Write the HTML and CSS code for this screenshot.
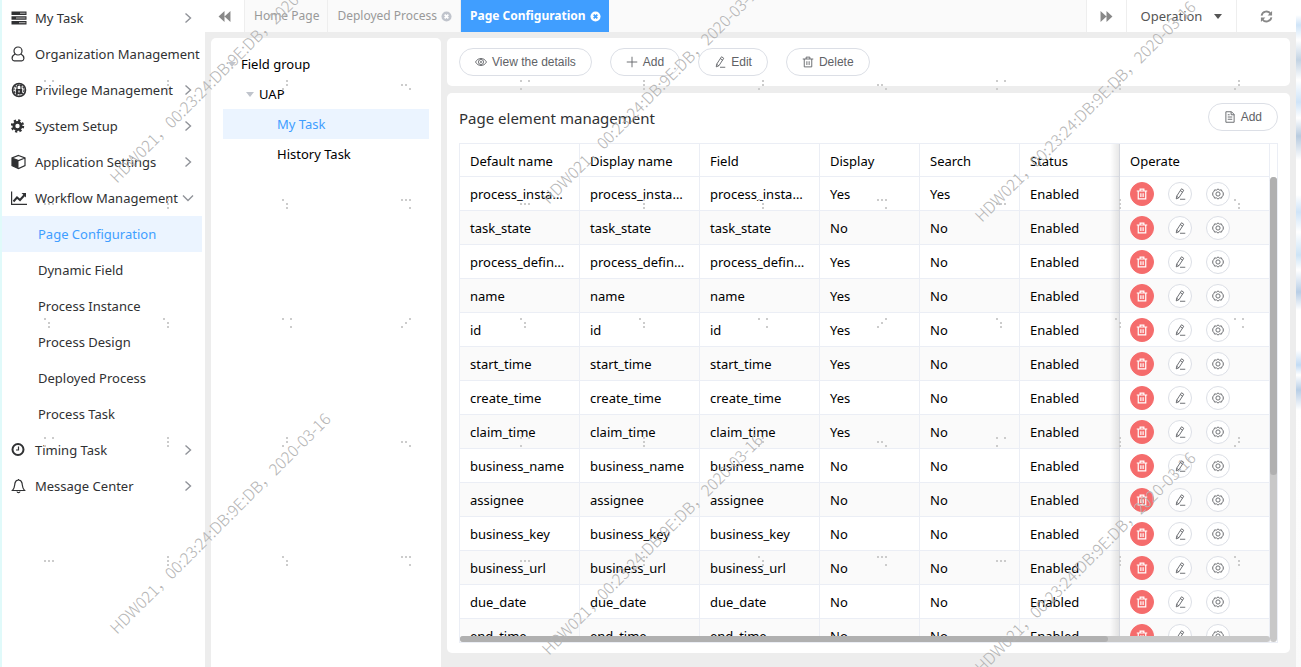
FILE: index.html
```html
<!DOCTYPE html>
<html lang="en">
<head>
<meta charset="utf-8">
<title>Page Configuration</title>
<link rel="stylesheet" href="styles.css">
</head>
<body>
<svg class="defs" aria-hidden="true">
  <defs>
    <symbol id="trash" viewBox="0 0 16 16"><path d="M1 4h14M5.500 4V1.500h5V4M3 4v10.500h10V4M6.500 7v5M9.500 7v5"/></symbol>
    <symbol id="edit" viewBox="0 0 16 16"><path d="M10 1l3 2-6.500 10L3 14.500 3.500 11zM8.500 3.500l3 2M3.500 11l3 2M8 15h7"/></symbol>
    <symbol id="gear" viewBox="0 0 16 16"><path d="M8 1.200l2 1.600 2.600-.3.900 2.500 2 1.500-1 1.500 1 1.500-2 1.500-.9 2.500-2.600-.3-2 1.600-2-1.600-2.600.3-.9-2.500-2-1.500 1-1.500-1-1.500 2-1.500.9-2.500 2.600.3z"/><circle cx="8" cy="8" r="2.800"/></symbol>
    <symbol id="plus" viewBox="0 0 16 16"><path d="M8 1v14M1 8h14"/></symbol>
    <symbol id="eye" viewBox="0 0 16 16"><path d="M.7 8C4 1.700 12 1.700 15.300 8 12 14.300 4 14.300.7 8z"/><circle cx="8" cy="8" r="3.400"/><circle cx="8" cy="8" r=".8"/></symbol>
    <symbol id="doc" viewBox="0 0 16 16"><path d="M2.500 1h7.500l3.500 3.500V15h-11zM9.500 1v4h4M5 5h2.500M5 8h6M5 11h6"/></symbol>
    <symbol id="right" viewBox="0 0 12 12"><path d="M3.500 1.500L8.500 6 3.500 10.500"/></symbol>
    <symbol id="down" viewBox="0 0 12 12"><path d="M1 3.500L6 8.500 11 3.500"/></symbol>
    <symbol id="rewind" viewBox="0 0 14 12"><path d="M7 0v12L.5 6zM13.500 0v12L7 6z"/></symbol>
    <symbol id="close" viewBox="0 0 12 12"><circle cx="6" cy="6" r="5.500" fill="currentColor"/><path class="cross" d="M4 4l4 4M8 4L4 8"/></symbol>
  </defs>
</svg>
<div class="app">
  <nav class="sidebar" aria-label="Main menu">
    <a class="item" href="#"><svg class="mi fill" viewBox="0 0 16 16"><path d="M.5 1.500h15v3.500H.5zM.5 6.300h15v3.500H.5zM.5 11h15v3.500H.5z"/><path class="light" d="M9 3.200h5.500M5 8h9.500M8 12.700h6.500"/></svg><span>My Task</span><svg class="arrow"><use href="#right"/></svg></a>
    <a class="item" href="#"><svg class="mi line" viewBox="0 0 16 16"><circle cx="7" cy="5" r="4"/><path d="M4 8C1.500 9.500 1 12 1.200 13c.2 1 1 1.800 2 1.800h7.600c1 0 1.800-.8 2-1.800.2-1-.3-3.500-2.800-5"/></svg><span>Organization Management</span></a>
    <a class="item" href="#"><svg class="mi line" viewBox="0 0 16 16"><circle cx="8" cy="8" r="6.500" stroke-width="1.600"/><circle cx="8" cy="8" r="5" stroke-dasharray="2 1"/><path class="solid" d="M4.800 7h6.400v5H4.800z"/><path d="M6 7V5a2 2 0 014 0v2"/><path class="light" d="M8 8.500v2"/></svg><span>Privilege Management</span><svg class="arrow"><use href="#right"/></svg></a>
    <a class="item" href="#"><svg class="mi line" viewBox="0 0 16 16"><circle cx="6.500" cy="8" r="3.600" stroke-width="2.800"/><circle cx="6.500" cy="8" r="5.500" stroke-width="2.400" stroke-dasharray="2.200 2.120"/></svg><span>System Setup</span><svg class="arrow"><use href="#right"/></svg></a>
    <a class="item" href="#"><svg class="mi line" viewBox="0 0 16 16"><path d="M7.500 1.500l6.500 2.500v7.500L7.500 14.500 1 11.500V4zM1 4l6.500 2.500L14 4"/><path class="solid" d="M1 4l6.500 2.500v8L1 11.500z"/></svg><span>Application Settings</span><svg class="arrow"><use href="#right"/></svg></a>
    <a class="item" href="#"><svg class="mi line" viewBox="0 0 16 16"><path d="M.6 1.500v12.900H16"/><path stroke-width="2" d="M2.500 11.500l3.500-4 3 2.500 4.500-5"/><path class="solid" d="M10.500 3h4.500v4.500z"/></svg><span>Workflow Management</span><svg class="arrow"><use href="#down"/></svg></a>
    <a class="sub active" href="#">Page Configuration</a>
    <a class="sub" href="#">Dynamic Field</a>
    <a class="sub" href="#">Process Instance</a>
    <a class="sub" href="#">Process Design</a>
    <a class="sub" href="#">Deployed Process</a>
    <a class="sub" href="#">Process Task</a>
    <a class="item" href="#"><svg class="mi line" viewBox="0 0 16 16"><circle cx="7" cy="7.500" r="5.500" stroke-width="2"/><path d="M7.500 4.500v3.500H5"/></svg><span>Timing Task</span><svg class="arrow"><use href="#right"/></svg></a>
    <a class="item" href="#"><svg class="mi line" viewBox="0 0 16 16"><path d="M7.500 1v1M1.500 12.500C4 10 3.500 7 4 5c.5-2 2-3 3.500-3S10.500 3 11 5c.5 2 0 5 2.500 7.500zM6 13.500c.3 1.500 2.700 1.500 3 0"/></svg><span>Message Center</span><svg class="arrow"><use href="#right"/></svg></a>
  </nav>
  <div class="main">
    <header class="tabs">
      <button class="tool" aria-label="Scroll tabs left"><svg class="ff"><use href="#rewind"/></svg></button>
      <div class="tablist">
        <a class="tab" href="#">Home Page</a>
        <a class="tab" href="#">Deployed Process<svg class="x"><use href="#close"/></svg></a>
        <a class="tab current" href="#">Page Configuration<svg class="x"><use href="#close"/></svg></a>
      </div>
      <button class="tool" aria-label="Scroll tabs right"><svg class="ff flip"><use href="#rewind"/></svg></button>
      <button class="tool operation">Operation<span class="caret"></span></button>
      <button class="tool refresh" aria-label="Refresh"><svg class="rf" viewBox="0 0 14 14"><path d="M1.700 6A5.400 5.400 0 0111.500 4M12.300 8A5.400 5.400 0 012.500 10"/><path class="solid" d="M13 1v4.800H8.200zM1 13V8.200h4.800z"/></svg></button>
    </header>
    <div class="content">
      <section class="tree">
        <a class="node lv1" href="#"><span class="caret"></span>Field group</a>
        <a class="node lv2" href="#"><span class="caret"></span>UAP</a>
        <a class="node leaf active" href="#">My Task</a>
        <a class="node leaf" href="#">History Task</a>
      </section>
      <div class="right">
        <section class="panel bar">
          <button class="btn"><svg><use href="#eye"/></svg>View the details</button>
          <button class="btn"><svg><use href="#plus"/></svg>Add</button>
          <button class="btn"><svg><use href="#edit"/></svg>Edit</button>
          <button class="btn"><svg><use href="#trash"/></svg>Delete</button>
        </section>
        <section class="panel list">
          <div class="head"><h2>Page element management</h2><button class="btn"><svg><use href="#doc"/></svg>Add</button></div>
          <div class="grid">
            <table>
              <colgroup><col class="wide"><col class="wide"><col class="wide"><col class="mid"><col class="mid"><col class="mid"><col></colgroup>
              <thead><tr><th>Default name</th><th>Display name</th><th>Field</th><th>Display</th><th>Search</th><th>Status</th><th class="op">Operate</th></tr></thead>
              <tbody id="rows"></tbody>
            </table>
            <div class="vbar"><div class="vthumb"></div></div>
            <div class="hbar"><div class="hthumb"></div></div>
          </div>
        </section>
      </div>
    </div>
  </div>
  <div class="edge"></div>
</div>
<svg class="watermark" aria-hidden="true">
  <defs>
    <pattern id="dots" x="44" y="80" width="476" height="357" patternUnits="userSpaceOnUse"><path id="dotpath"/></pattern>
  </defs>
  <rect width="100%" height="100%" fill="url(#dots)"/>
  <g id="marks"></g>
</svg>
<script src="app.js"></script>
</body>
</html>
```
FILE: styles.css
```css
* { box-sizing: border-box; }
body { margin: 0; font: 13px/20px "Noto Sans", "Noto Sans CJK SC", sans-serif; color: #000; }
a { color: inherit; text-decoration: none; }
button { font: inherit; color: inherit; margin: 0; cursor: pointer; }
svg { fill: none; stroke: currentColor; flex: none; }
.defs { position: absolute; width: 0; height: 0; }
.solid { fill: currentColor; stroke: none; }
.light { stroke: #fff; }
.cross { stroke: var(--cross, #fff); stroke-width: 2; }

.app { display: flex; height: 100vh; overflow: hidden; background: #ededed; }

.sidebar { width: 205px; flex: none; background: #fff; border-left: 2px solid #e0fafa; padding-right: 3px; color: #303133; }
.item { display: flex; align-items: center; height: 36px; padding: 0 8px 0 9px; white-space: nowrap; }
.item span { flex: 1; min-width: 0; }
.mi { width: 16px; height: 16px; margin-right: 8px; }
.mi.line { stroke-width: 1.200; }
.mi.fill { fill: currentColor; stroke: none; }
.mi.fill .light { stroke: #bbb; }
.arrow { width: 12px; height: 12px; color: #909399; stroke-width: 1.400; }
.sub { display: flex; align-items: center; height: 36px; padding-left: 36px; }
.active { background: #ebf4ff; color: #409eff; }

.main { flex: 1; min-width: 0; display: flex; flex-direction: column; }
.tabs { display: flex; height: 32px; flex: none; background: #fff; }
.tool { display: flex; align-items: center; justify-content: center; width: 40px; padding: 0; background: #fff; border: 0; border-right: 1px solid #eee; color: #888; }
.tool:last-child { border-right: 0; }
.ff { width: 13px; height: 11px; fill: currentColor; stroke: none; }
.flip { transform: scaleX(-1); }
.operation { width: 110px; gap: 12px; color: #555; }
.refresh { width: 59px; }
.rf { width: 13px; height: 13px; stroke-width: 2; }
.caret { border: 4px solid transparent; border-top: 5px solid currentColor; border-bottom: 0; }
.tablist { flex: 1; display: flex; background: #fafafa; border-right: 1px solid #eee; font-size: 12px; }
.tab { display: flex; align-items: center; gap: 4px; padding: 0 8px 0 9px; border-right: 1px solid #eee; color: #999; }
.tab.current { background: #409eff; color: #fff; font-weight: bold; border-right: 0; }
.x { width: 11px; height: 11px; color: #c0c4cc; stroke: none; }
.current .x { --cross: #409eff; color: #fff; }

.content { flex: 1; min-height: 0; display: flex; gap: 6px; padding: 6px 6px 0; }
.tree { width: 230px; flex: none; background: #fff; border-radius: 5px 5px 0 0; padding: 11px 12px; }
.node { display: flex; align-items: center; gap: 5px; height: 30px; }
.node .caret { color: #c0c4cc; }
.lv1 { padding-left: 5px; }
.lv2 { padding-left: 23px; }
.leaf { padding-left: 54px; }
.right { flex: 1; min-width: 0; display: flex; flex-direction: column; gap: 7px; padding-bottom: 14px; }
.panel { background: #fff; border-radius: 5px; }
.bar { display: flex; gap: 18px; padding: 10px 12px; }
.btn { display: flex; align-items: center; gap: 5px; height: 28px; padding: 0 15px; background: #fff; border: 1px solid #dcdfe6; border-radius: 14px; color: #606266; font: 12px/12px "Liberation Sans", Arial, sans-serif; }
.btn svg { width: 12px; height: 12px; stroke-width: 1.200; }
.list { flex: 1; min-height: 0; display: flex; flex-direction: column; padding: 10px 12px; }
.head { display: flex; justify-content: space-between; align-items: center; height: 28px; margin-bottom: 12px; }
h2 { margin: 2px 0 0; font-size: 15px; line-height: 20px; font-weight: normal; color: #303133; }

.grid { position: relative; flex: 1; min-height: 0; overflow: hidden; border: 1px solid #ebeef5; padding-right: 7px; }
table { width: 100%; table-layout: fixed; border-spacing: 0; }
.wide { width: 120px; }
.mid { width: 100px; }
th, td { height: 34px; padding: 0 14px 0 10px; border-right: 1px solid #ebeef5; border-bottom: 1px solid #ebeef5; font-weight: normal; text-align: left; white-space: nowrap; overflow: hidden; text-overflow: ellipsis; }
th { height: 33px; padding-top: 2px; }
tbody tr:nth-child(even) td { background: #fafafa; }
.op { position: relative; overflow: visible; }
.op::before { content: ""; position: absolute; left: -10px; top: 0; bottom: -1px; width: 10px; background: linear-gradient(to left, rgba(0, 0, 0, .1), rgba(0, 0, 0, 0)); }
.ops { display: flex; gap: 14px; }
.round { display: flex; align-items: center; justify-content: center; width: 24px; height: 24px; padding: 0; border: 1px solid #dcdfe6; border-radius: 50%; background: #fff; color: #606266; }
.round svg { width: 12px; height: 12px; stroke-width: 1.200; }
.danger { background: #f56c6c; border-color: #f56c6c; color: #fff; }
.round.danger svg { stroke-width: 1.600; }
.vbar { position: absolute; right: 0; top: 33px; bottom: 0; width: 7px; background: #c8c8c8; border-radius: 4px; }
.vthumb { height: 64%; background: #b0b0b0; border-radius: 4px; }
.hbar { position: absolute; left: 0; right: 7px; bottom: 0; height: 6px; background: #c8c8c8; border-radius: 4px; }
.hthumb { width: 80%; height: 6px; background: #b0b0b0; border-radius: 4px; }

.edge { width: 5px; flex: none; background: linear-gradient(#fff 15px, #cfe4f8 25px, #fff 40px, #c3d3e3 60px, #fff 80px, #cfe4f8 102px, #fff 118px, #b8cbdf 136px, #fff 160px, #fff 195px, #cfe4f8 212px, #fff 232px, #cde4f6 255px, #fff 270px, #b8cee6 292px, #fff 310px, #fff 350px, #c2dbf4 365px, #fff 375px, #b8cee6 390px, #fff 410px, #fafafa 667px); }

.watermark { position: absolute; inset: 0; width: 100%; height: 100vh; pointer-events: none; overflow: hidden; stroke: none; }
.watermark path { fill: #ccc; }
.watermark text { font: 300 16px "Noto Sans CJK SC", sans-serif; fill: #b4b4b4; }
```
FILE: app.js
```js
const names = ["process_instance_id", "task_state", "process_definition_id", "name", "id", "start_time", "create_time", "claim_time", "business_name", "assignee", "business_key", "business_url", "due_date", "end_time"];
const displayed = new Set([0, 2, 3, 4, 5, 6, 7]);
const icon = (id) => `<svg><use href="#${id}"/></svg>`;
document.getElementById("rows").innerHTML = names.map((n, i) => `<tr>
  <td>${n}</td><td>${n}</td><td>${n}</td>
  <td>${displayed.has(i) ? "Yes" : "No"}</td><td>${i === 0 ? "Yes" : "No"}</td><td>Enabled</td>
  <td class="op"><div class="ops">
    <button class="round danger" aria-label="Delete">${icon("trash")}</button>
    <button class="round" aria-label="Edit">${icon("edit")}</button>
    <button class="round" aria-label="Settings">${icon("gear")}</button>
  </div></td></tr>`).join("");

// Dot clusters: each string lists the filled cells of a 3x3 grid.
const clusters = [
  ["026", "147", "146", "348"],
  ["345", "147", "047", "0128"],
  ["047", "047", "028", "246"]
];
let d = "";
clusters.forEach((row, r) => row.forEach((cells, c) => {
  for (const n of cells) {
    d += `M${c * 119 + (n % 3) * 4} ${r * 119 + Math.floor(n / 3) * 4}h2v2h-2z`;
  }
}));
document.getElementById("dotpath").setAttribute("d", d);

const marks = [[117, 184], [117, 635], [549, 205], [549, 656], [982, 223], [982, 674]];
document.getElementById("marks").innerHTML = marks.map(([x, y]) =>
  `<text transform="translate(${x} ${y}) rotate(-45)">HDW021，00:23:24:DB:9E:DB，2020-03-16</text>`).join("");
```
